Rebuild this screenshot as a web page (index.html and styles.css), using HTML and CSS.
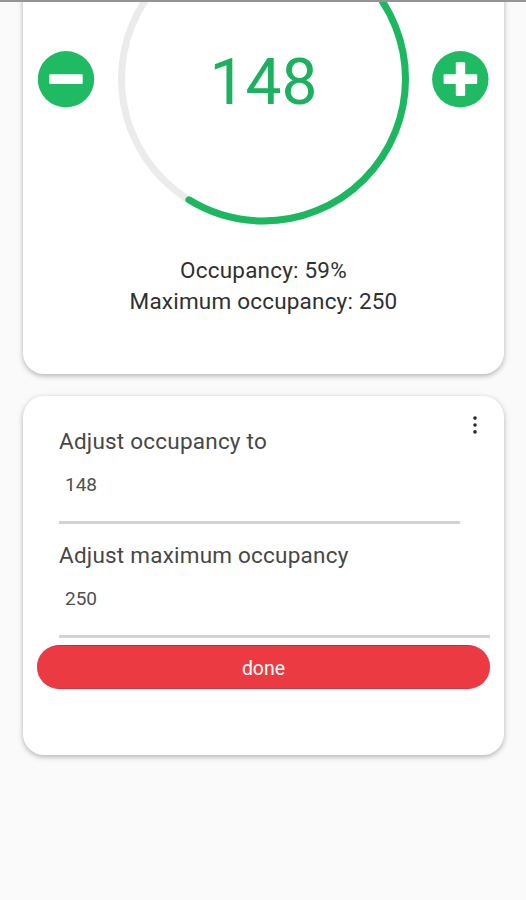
FILE: index.html
```html
<!DOCTYPE html>
<html lang="en">
<head>
<meta charset="utf-8">
<title>Occupancy</title>
<link rel="stylesheet" href="styles.css">
</head>
<body>
<main class="screen">
  <section class="card counter">
    <div class="controls">
      <button class="round" aria-label="Decrease"><svg viewBox="0 0 57 57"><circle cx="28" cy="28.3" r="28.2"/><rect x="11.3" y="23.3" width="33.4" height="9.6" rx="1"/></svg></button>
      <div class="dial">
        <svg viewBox="0 0 292 292">
          <circle class="track" cx="145.5" cy="146" r="142"/>
          <circle class="value" cx="145.5" cy="146" r="142" pathLength="100" stroke-dasharray="58.8 100" transform="rotate(-90 145.5 146)"/>
        </svg>
        <span class="count">148</span>
      </div>
      <button class="round" aria-label="Increase"><svg viewBox="0 0 57 57"><circle cx="28.3" cy="28.3" r="28.2"/><rect x="11.6" y="23.3" width="33.6" height="9.6" rx="1"/><rect x="23.8" y="11.2" width="9.4" height="33.8" rx="1"/></svg></button>
    </div>
    <div class="summary">
      <p>Occupancy: 59%</p>
      <p>Maximum occupancy: 250</p>
    </div>
  </section>
  <section class="card form">
    <svg class="menu" viewBox="0 0 6 18"><circle cx="3" cy="2.1" r="1.8"/><circle cx="3" cy="9" r="1.8"/><circle cx="3" cy="15.9" r="1.8"/></svg>
    <div class="field short">
      <div class="label">Adjust occupancy to</div>
      <div class="entry">148</div>
    </div>
    <div class="field">
      <div class="label">Adjust maximum occupancy</div>
      <div class="entry">250</div>
    </div>
    <button class="done">done</button>
  </section>
</main>
</body>
</html>
```
FILE: styles.css
```css
* { box-sizing: border-box; }
body {
  margin: 0;
  background: #fafafa;
  font-family: Roboto, "Liberation Sans", sans-serif;
  color: #303030;
}
.screen {
  height: 900px;
  overflow: hidden;
  border-top: 2px solid #959393;
  padding: 0 22px 0 23px;
}
.card {
  background: #fff;
  border-radius: 21px;
  box-shadow: 0 2px 5px rgba(0, 0, 0, .23), 0 1px 9px rgba(0, 0, 0, .07);
}
.counter {
  height: 471.5px;
  margin-top: -100px;
  padding: 31px 15px 0;
}
.controls {
  display: flex;
  align-items: center;
  justify-content: space-between;
  height: 292px;
}
.round {
  width: 57px;
  height: 57px;
  padding: 0;
  border: 0;
  background: none;
}
.round svg { display: block; fill: #1fbb63; }
.round rect { fill: #fff; }
.dial { display: grid; width: 292px; height: 292px; place-items: center; }
.dial > * { grid-area: 1 / 1; }
.dial svg { display: block; width: 292px; height: 292px; fill: none; stroke-width: 7; }
.track { stroke: #ebebeb; }
.value { stroke: #1bb860; stroke-linecap: round; }
.count { font-size: 64px; line-height: 74px; color: #1bb15f; margin-top: 7px; }
.summary { margin-top: 30px; text-align: center; font-size: 22.5px; line-height: 30.5px; letter-spacing: .2px; }
.summary p { margin: 0; }
.form {
  position: relative;
  height: 359px;
  margin-top: 22px;
  padding: 30.5px 14px 0;
}
.menu { position: absolute; top: 20.5px; right: 26.5px; width: 6px; height: 18px; fill: #292929; }
.field {
  height: 114px;
  margin-left: 22px;
  padding-top: 16px;
  border-bottom: 3px solid #d3d3d3;
}
.short { width: 401px; height: 97.5px; padding-top: 0; }
.label { font-size: 22.5px; line-height: 30px; color: #474747; letter-spacing: .22px; }
.entry { margin: 15px 0 0 6px; font-size: 19px; line-height: 28px; color: #505050; }
.done {
  display: block;
  width: 453px;
  height: 43.5px;
  margin-top: 7.5px;
  padding: 3px 0 0;
  border: 0;
  border-top: 1px solid #dc2439;
  border-bottom: 1px solid #e23040;
  border-radius: 22px;
  background: #ec3a43;
  color: #fff;
  font: 19.5px Roboto, "Liberation Sans", sans-serif;
}
```
